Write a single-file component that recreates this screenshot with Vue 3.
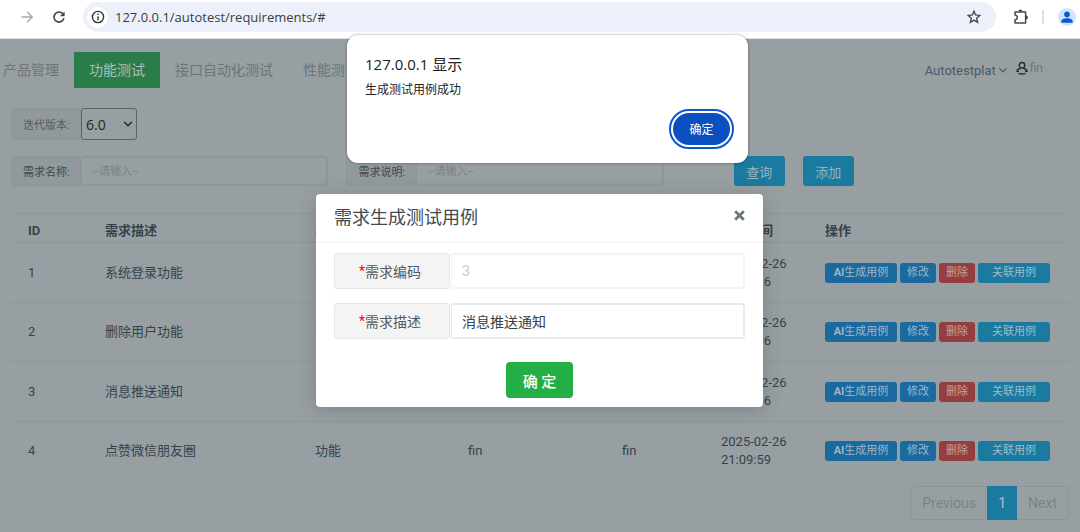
<script setup>
import { ref } from 'vue'

const tabs = ['产品管理', '功能测试', '接口自动化测试', '性能测试']
const activeTab = ref('功能测试')
const version = ref('6.0')
const nameQuery = ref('')
const noteQuery = ref('')
const caseCode = ref('3')
const caseTitle = ref('消息推送通知')
const url = ref('127.0.0.1/autotest/requirements/#')

const headers = ['ID', '需求描述', '类型', '创建人', '更新人', '更新时间', '操作']
const rows = [
  { id: 1, title: '系统登录功能', time: '21:09:26' },
  { id: 2, title: '删除用户功能', time: '21:09:36' },
  { id: 3, title: '消息推送通知', time: '21:09:46' },
  { id: 4, title: '点赞微信朋友圈', time: '21:09:59' },
]
</script>

<template>
  <div class="window">
    <header class="toolbar">
      <button class="tool" aria-label="前进">
        <svg width="16" height="16" viewBox="0 0 16 16" fill="none" stroke="#a5a7a9" stroke-width="1.4"><path d="M2.5 8h10.5M8.2 3l5 5-5 5" /></svg>
      </button>
      <button class="tool" aria-label="重新加载">
        <svg width="16" height="16" viewBox="0 0 16 16" fill="none" stroke="#474747" stroke-width="1.6"><path d="M12.9 9.2A5 5 0 1 1 12 5" /><path d="M13.6 2.4v4.8H8.8z" fill="#474747" stroke="none" /></svg>
      </button>
      <div class="address">
        <span class="site-info">
          <svg width="14" height="14" viewBox="0 0 14 14" fill="none" stroke="#333" stroke-width="1.4"><circle cx="7" cy="7" r="5.6" /><path d="M7 6.2v4M7 3.7v1.4" /></svg>
        </span>
        <input v-model="url" class="url" aria-label="地址" />
        <svg class="star" width="16" height="16" viewBox="0 0 16 16" fill="none" stroke="#444" stroke-width="1.3"><path d="M8 2.2l1.6 3.8 4.2.4-3.2 2.8 1 4.1L8 11.1l-3.6 2.2 1-4.1-3.2-2.8 4.2-.4z" /></svg>
      </div>
      <button class="tool" aria-label="扩展程序">
        <svg width="18" height="18" viewBox="0 0 18 18" fill="none" stroke="#474747" stroke-width="1.5" stroke-linejoin="round"><path d="M3 3.9h10.6v11H3v-3.2a2.3 2.3 0 0 0 0-4.6z" /><path d="M6.4 3.5a2 2 0 0 1 4 0zM14 7.4a2 2 0 0 1 0 4z" fill="#474747" stroke="none" /></svg>
      </button>
      <span class="divider"></span>
      <button class="tool avatar" aria-label="用户">
        <svg width="18" height="18" viewBox="0 0 18 18"><circle cx="9" cy="9" r="9" fill="#d3e3fd" /><circle cx="9" cy="6.4" r="2.8" fill="#0b57d0" /><path d="M3.4 14.8v-1.6c0-2 2.7-3 5.6-3s5.6 1 5.6 3v1.6z" fill="#0b57d0" /></svg>
      </button>
    </header>

    <main class="page">
      <div class="topbar">
        <nav class="tabs">
          <a v-for="tab in tabs" :key="tab" href="#" class="tab" :class="{ active: tab === activeTab }" @click.prevent="activeTab = tab">{{ tab }}</a>
        </nav>
        <a href="#" class="project">Autotestplat
          <svg width="10" height="10" viewBox="0 0 10 10" fill="none" stroke="#485a64" stroke-width="1.2"><path d="M1.2 3.2L5 7l3.8-3.8" /></svg>
        </a>
        <a href="#" class="account">
          <svg width="12" height="14" viewBox="0 0 12 14" fill="none" stroke="#272d31" stroke-width="1.4"><circle cx="6" cy="4.3" r="2.8" /><path d="M4.6 7.2C2.4 7.8 1 8.9 1 10.4h2M7.4 7.2c2.2.6 3.6 1.7 3.6 3.2H9M2.4 12.4c2 .7 5.2.7 7.2 0" /></svg>
          fin
        </a>
      </div>

      <div class="filters">
        <div class="field">
          <label class="addon muted" for="version">迭代版本:</label>
          <span class="select-wrap">
            <select id="version" v-model="version">
              <option>6.0</option>
            </select>
            <svg width="10" height="10" viewBox="0 0 10 10" fill="none" stroke="#20272b" stroke-width="1.5"><path d="M1.2 3L5 6.8 8.8 3" /></svg>
          </span>
        </div>
      </div>

      <div class="filters search">
        <div class="field query">
          <label class="addon" for="name">需求名称:</label>
          <input id="name" v-model="nameQuery" placeholder="--请输入--" />
        </div>
        <div class="field query">
          <label class="addon" for="note">需求说明:</label>
          <input id="note" v-model="noteQuery" placeholder="--请输入--" />
        </div>
        <div class="actions">
          <button class="btn">查询</button>
          <button class="btn">添加</button>
        </div>
      </div>

      <table>
        <colgroup>
          <col class="c-id" /><col class="c-title" /><col class="c-kind" /><col class="c-author" /><col class="c-editor" /><col class="c-time" /><col class="c-ops" />
        </colgroup>
        <thead>
          <tr><th v-for="h in headers" :key="h">{{ h }}</th></tr>
        </thead>
        <tbody>
          <tr v-for="row in rows" :key="row.id">
            <td>{{ row.id }}</td>
            <td>{{ row.title }}</td>
            <td>功能</td>
            <td>fin</td>
            <td>fin</td>
            <td>2025-02-26 {{ row.time }}</td>
            <td>
              <div class="ops">
                <button class="op wide blue"><b>AI</b>生成用例</button>
                <button class="op blue">修改</button>
                <button class="op red">删除</button>
                <button class="op wide cyan">关联用例</button>
              </div>
            </td>
          </tr>
        </tbody>
      </table>

      <nav class="pager" aria-label="分页">
        <a href="#">Previous</a><a href="#" class="current">1</a><a href="#">Next</a>
      </nav>
    </main>

    <div class="layer modal-layer">
      <section class="modal" role="dialog" aria-labelledby="modal-title">
        <div class="modal-head">
          <h4 id="modal-title">需求生成测试用例</h4>
          <button class="close" aria-label="关闭">
            <svg width="11" height="11" viewBox="0 0 11 11" stroke="#6d777b" stroke-width="2.8"><path d="M1.2 1.2l8.6 8.6M9.8 1.2L1.2 9.8" /></svg>
          </button>
        </div>
        <form class="modal-body" @submit.prevent>
          <div class="row">
            <label for="code"><i>*</i>需求编码</label>
            <input id="code" v-model="caseCode" disabled />
          </div>
          <div class="row">
            <label for="title"><i>*</i>需求描述</label>
            <input id="title" v-model="caseTitle" />
          </div>
          <button class="submit">确 定</button>
        </form>
      </section>
    </div>

    <div class="layer alert-layer">
      <section class="alert" role="alertdialog" aria-labelledby="alert-title">
        <h2 id="alert-title">127.0.0.1 显示</h2>
        <p>生成测试用例成功</p>
        <button class="confirm">确定</button>
      </section>
    </div>
  </div>
</template>

<style>
body {
  margin: 0;
}
</style>

<style scoped>
* {
  box-sizing: border-box;
}
.window {
  position: relative;
  display: flex;
  flex-direction: column;
  min-height: 100vh;
  overflow: hidden;
  background: #989fa2;
  color: #35424a;
  font-family: Roboto, "Noto Sans CJK SC", sans-serif;
  font-size: 13px;
}
button,
input,
select {
  margin: 0;
  padding: 0;
  border: 0;
  background: none;
  color: inherit;
  font-family: inherit;
  outline: none;
}
a {
  color: inherit;
  text-decoration: none;
}
svg {
  display: block;
  flex: none;
}

.toolbar {
  display: flex;
  align-items: center;
  height: 39px;
  padding: 0 4px 4px 19px;
  background: #fff;
  border-bottom: 1px solid #dfe3e4;
}
.tool {
  flex: none;
  margin-right: 16px;
}
.address {
  display: flex;
  flex: 1;
  align-items: center;
  height: 30px;
  margin-right: 16px;
  padding: 0 14px 0 4px;
  border-radius: 15px;
  background: #ecf0fa;
}
.site-info {
  display: flex;
  align-items: center;
  justify-content: center;
  width: 21px;
  height: 21px;
  margin-right: 7px;
  border-radius: 50%;
  background: #fff;
}
.url {
  flex: 1;
  min-width: 0;
  color: #3a3d40;
  font-family: "Open Sans", sans-serif;
  font-size: 13px;
}
.toolbar .tool:nth-of-type(3) {
  margin-right: 12px;
}
.divider {
  width: 2px;
  height: 14px;
  margin-right: 14px;
  background: #d3e3fd;
}
.toolbar .avatar {
  margin-right: 0;
}

.page {
  padding: 13px 11px 12px;
}
.topbar {
  display: flex;
  align-items: center;
  height: 36px;
  margin-left: -23px;
  padding-right: 26px;
}
.tabs {
  display: flex;
  flex: 1;
}
.tab {
  padding: 0 15px;
  color: #6c7578;
  font-size: 14px;
  line-height: 36px;
}
.tab.active {
  background: #2a7c4b;
  color: #a9c2b2;
}
.project,
.account {
  display: flex;
  align-items: center;
  gap: 2px;
  color: #485a64;
  font-size: 12px;
}
.project {
  margin-right: 8px;
  font-size: 13px;
}
.account {
  padding-bottom: 4px;
  color: #6c7578;
}

.filters {
  display: flex;
  margin-top: 20px;
}
.search {
  margin-top: 16px;
}
.field {
  display: flex;
  height: 32px;
}
.query {
  flex: 0 0 30%;
  height: 30px;
  margin-right: 18px;
}
.addon {
  display: flex;
  flex: none;
  align-items: center;
  width: 70px;
  padding-left: 11px;
  border: 1px solid #8d9598;
  border-radius: 3px;
  background: #92999c;
  color: #3d484e;
  font-size: 11px;
}
.addon.muted {
  color: #525d63;
}
.select-wrap {
  position: relative;
  display: flex;
}
.select-wrap select {
  width: 56px;
  padding-left: 4px;
  border: 1px solid #5c6366;
  border-radius: 3px;
  appearance: none;
  color: #20272b;
  font-family: "Open Sans", sans-serif;
  font-size: 14px;
}
.select-wrap svg {
  position: absolute;
  top: 11px;
  right: 4px;
  pointer-events: none;
}
.query input {
  flex: 1;
  min-width: 0;
  padding: 0 11px;
  border: 2px solid #8f9699;
  border-left-width: 1px;
  border-radius: 3px;
  font-size: 11px;
}
.query input::placeholder {
  color: #7b8386;
  opacity: 1;
}
.actions {
  display: flex;
  gap: 18px;
  margin-left: 52px;
}
.btn {
  width: 51px;
  height: 30px;
  border-radius: 3px;
  background: #1b7a9f;
  color: #97b4be;
  font-size: 13px;
}

table {
  width: 100%;
  margin-top: 27px;
  border-collapse: collapse;
  table-layout: fixed;
}
.c-id {
  width: 77px;
}
.c-title {
  width: 210px;
}
.c-kind {
  width: 153px;
}
.c-author {
  width: 154px;
}
.c-editor {
  width: 99px;
}
.c-time {
  width: 104px;
}
.c-ops {
  width: 261px;
}
th,
td {
  padding: 0 17px;
  border-top: 1px solid #8e9699;
  text-align: left;
  line-height: 18px;
}
th {
  height: 29px;
  padding-top: 6px;
  font-weight: 700;
}
td {
  height: 60px;
}
tr:nth-child(even) td {
  height: 59px;
}
.ops {
  display: flex;
  gap: 3px;
}
.op {
  flex: none;
  width: 36px;
  height: 20px;
  border-radius: 3px;
  font-size: 11px;
  line-height: 20px;
}
.op.wide {
  width: 72px;
}
.blue {
  background: #1a6aa0;
  color: #9fb6c6;
}
.red {
  background: #963e3f;
  color: #c0a1a2;
}
.cyan {
  background: #1b7a9f;
  color: #9fbbc5;
}

.pager {
  display: flex;
  width: max-content;
  height: 34px;
  margin: 5px 0 0 auto;
  border: 1px solid #8c9497;
  border-radius: 4px;
}
.pager a {
  padding: 0 11px;
  color: #7a8387;
  font-size: 14px;
  line-height: 32px;
}
.pager .current {
  margin: -1px 0;
  background: #1b7a9f;
  color: #b0c3ca;
  line-height: 34px;
}

.layer {
  position: absolute;
  right: 0;
  left: 0;
  display: flex;
  justify-content: center;
  pointer-events: none;
}
.modal-layer {
  top: 194px;
  padding-right: 1px;
}
.alert-layer {
  top: 35px;
  padding-left: 15px;
}
.modal,
.alert {
  pointer-events: auto;
  background: #fff;
}
.modal {
  width: 447px;
  border-radius: 4px;
  box-shadow: 0 3px 18px rgba(40, 50, 55, 0.25);
}
.modal-head {
  display: flex;
  align-items: flex-start;
  justify-content: space-between;
  height: 49px;
  padding: 11px 18px 0;
  border-bottom: 1px solid #f0f1f1;
}
h4 {
  margin: 0;
  color: #3f4b53;
  font-size: 18px;
  font-weight: 400;
  line-height: 26px;
}
.close {
  margin-top: 5px;
}
.modal-body {
  display: flex;
  flex-direction: column;
  gap: 14px;
  padding: 10px 18px 9px;
}
.row {
  display: flex;
  gap: 1px;
}
.row label {
  display: flex;
  align-items: center;
  justify-content: center;
  width: 116px;
  height: 36px;
  padding-right: 4px;
  border: 1px solid #e6e8e8;
  border-radius: 3px;
  background: #f4f4f4;
  color: #52585d;
  font-size: 14px;
}
.row i {
  color: #f00;
  font-style: normal;
}
.row input {
  flex: 1;
  min-width: 0;
  padding: 0 10px;
  border: 2px solid #e8ebeb;
  border-left-width: 1px;
  border-radius: 3px;
  font-size: 14px;
}
.row input:disabled {
  border-color: #f3f4f4;
  color: #c6c8ca;
}
.submit {
  align-self: center;
  width: 67px;
  height: 36px;
  margin-top: 9px;
  border-radius: 4px;
  background: #23af46;
  color: #fff;
  font-size: 15px;
  font-weight: 500;
}
.alert {
  display: flex;
  flex-direction: column;
  width: 401px;
  padding: 18px 18px 17px 18px;
  border-radius: 11px;
  box-shadow: 0 0 3px rgba(0, 0, 0, 0.4);
  color: #222;
  font-family: "Open Sans", "Noto Sans CJK SC", sans-serif;
}
h2 {
  margin: 0;
  font-size: 15px;
  font-weight: 400;
  line-height: 22px;
}
.alert p {
  margin: 6px 0 13px;
  font-size: 12px;
  line-height: 18px;
}
.confirm {
  align-self: flex-end;
  width: 57px;
  height: 32px;
  margin: 1px 0 1px;
  border-radius: 16px;
  background: #0b50c0;
  outline: 2px solid #0b57d0;
  outline-offset: 2px;
  color: #fff;
  font-size: 12px;
}
</style>
